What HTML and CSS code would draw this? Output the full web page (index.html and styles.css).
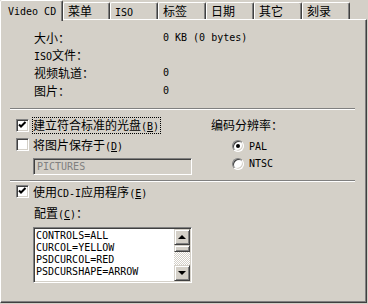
FILE: index.html
```html
<!DOCTYPE html>
<html lang="zh">
<head>
    <meta charset="UTF-8">
    <title>Video CD</title>
    <link rel="stylesheet" href="styles.css">
</head>
<body>
    <div class="dialog">
        <div class="tabs">
            <div class="tab active"><span class="en">Video CD</span></div>
            <div class="tab">菜单</div>
            <div class="tab"><span class="en">ISO</span></div>
            <div class="tab">标签</div>
            <div class="tab">日期</div>
            <div class="tab">其它</div>
            <div class="tab">刻录</div>
        </div>

        <div class="panel">
            <div class="info">
                <span>大小：</span><span class="en">0 KB (0 bytes)</span>
                <span><span class="en">ISO</span>文件：</span><span></span>
                <span>视频轨道：</span><span class="en">0</span>
                <span>图片：</span><span class="en">0</span>
            </div>

            <div class="sep"></div>

            <div class="mid">
                <div class="left">
                    <div class="check">
                        <span class="box"><svg width="9" height="9" viewBox="0 0 9 9"><path d="M1 3.5 L3 5.5 L7.5 1" fill="none" stroke="#000" stroke-width="2"/></svg></span>
                        <span class="focus">建立符合标准的光盘<span class="en">(<u>B</u>)</span></span>
                    </div>
                    <div class="check">
                        <span class="box"></span>
                        <span class="text">将图片保存于<span class="en">(<u>D</u>)</span></span>
                    </div>
                    <div class="field en">PICTURES</div>
                </div>
                <div class="right">
                    <div class="res-label">编码分辨率：</div>
                    <div class="radio first"><span class="dot on"></span><span class="en">PAL</span></div>
                    <div class="radio"><span class="dot"></span><span class="en">NTSC</span></div>
                </div>
            </div>

            <div class="sep second"></div>

            <div class="check cdi">
                <span class="box"><svg width="9" height="9" viewBox="0 0 9 9"><path d="M1 3.5 L3 5.5 L7.5 1" fill="none" stroke="#000" stroke-width="2"/></svg></span>
                <span class="text">使用<span class="en">CD-I</span>应用程序<span class="en">(<u>E</u>)</span></span>
            </div>

            <div class="cfg-label">配置<span class="en">(<u>C</u>)</span>：</div>

            <div class="listbox">
                <div class="lines en">
                    <div>CONTROLS=ALL</div>
                    <div>CURCOL=YELLOW</div>
                    <div>PSDCURCOL=RED</div>
                    <div>PSDCURSHAPE=ARROW</div>
                </div>
                <div class="scroll">
                    <div class="btn"><span class="arrow up"></span></div>
                    <div class="btn thumb"></div>
                    <div class="track"></div>
                    <div class="btn"><span class="arrow down"></span></div>
                </div>
            </div>
        </div>
    </div>
</body>
</html>
```

FILE: styles.css
```css
body {
    margin: 0;
    background: #d4d0c8;
    font-family: "Noto Sans CJK SC", sans-serif;
    font-size: 12px;
    color: #000;
}

.en {
    font-family: "DejaVu Sans Mono", monospace;
    font-size: 10px;
}

.dialog {
    width: 367px;
}

/* tab strip */
.tabs {
    display: flex;
    align-items: flex-end;
    height: 19px;
}

.tab {
    box-sizing: border-box;
    width: 48px;
    height: 17px;
    border: 1px solid;
    border-bottom: none;
    border-color: #fff #404040 transparent #fff;
    border-radius: 2px 2px 0 0;
    box-shadow: inset -1px 0 #808080;
    padding-left: 4px;
    line-height: 15px;
    white-space: nowrap;
}

.tab:nth-child(2) {
    width: 47px;
}

.tab.active {
    width: 63px;
    height: 21px;
    margin-bottom: -2px;
    padding-left: 7px;
    line-height: 17px;
    background: #d4d0c8;
    position: relative;
    z-index: 1;
}

/* page */
.panel {
    box-sizing: border-box;
    height: 284px;
    border: 1px solid;
    border-color: #fff #404040 #404040 #fff;
    box-shadow: inset -1px -1px #808080;
}

.info {
    display: grid;
    grid-template-columns: 129px auto;
    grid-auto-rows: 17.5px;
    align-items: center;
    padding: 9px 0 0 33px;
    line-height: 17.5px;
}

.sep {
    height: 0;
    margin: 9px 11px 0 9px;
    border-top: 1px solid #808080;
    border-bottom: 1px solid #fff;
}

.sep.second {
    margin-top: 5px;
}

.mid {
    display: grid;
    grid-template-columns: 195px 1fr;
    margin-top: 6px;
    padding-left: 15px;
}

.check {
    display: flex;
    align-items: center;
    height: 19px;
}

.box {
    box-sizing: border-box;
    width: 13px;
    height: 13px;
    margin-right: 4px;
    background: #fff;
    border: 1px solid;
    border-color: #808080 #fff #fff #808080;
    box-shadow: inset 1px 1px #404040, inset -1px -1px #d4d0c8;
    display: flex;
    align-items: center;
    justify-content: center;
}

.box svg {
    display: block;
}

.focus {
    margin-left: -1px;
    border: 1px dotted #000;
    line-height: 13px;
    padding-right: 1px;
}

.field {
    box-sizing: border-box;
    width: 159px;
    height: 17px;
    margin: 4px 0 0 17px;
    padding-left: 3px;
    border: 1px solid;
    border-color: #808080 #fff #fff #808080;
    box-shadow: inset 1px 1px #404040, inset -1px -1px #d4d0c8;
    color: #808080;
    line-height: 15px;
}

.right .res-label {
    height: 18px;
    line-height: 18px;
}

.radio {
    display: flex;
    align-items: center;
    height: 17px;
    padding-left: 21px;
}

.radio.first {
    margin-top: 3px;
    height: 18px;
}

.dot {
    box-sizing: border-box;
    width: 12px;
    height: 12px;
    margin-right: 5px;
    border-radius: 50%;
    background: #fff;
    border: 1px solid;
    border-color: #808080 #fff #fff #808080;
    box-shadow: inset 1px 1px #404040, inset -1px -1px #d4d0c8;
    display: flex;
    align-items: center;
    justify-content: center;
}

.dot.on::after {
    content: "";
    width: 4px;
    height: 4px;
    border-radius: 50%;
    background: #000;
}

.check.cdi {
    height: 18px;
    padding-left: 15px;
}

.cfg-label {
    margin-top: 4px;
    padding-left: 33px;
    height: 18px;
    line-height: 18px;
}

/* list box */
.listbox {
    box-sizing: border-box;
    display: flex;
    width: 159px;
    height: 56px;
    margin: 5px 0 0 32px;
    background: #fff;
    border: 1px solid;
    border-color: #808080 #fff #fff #808080;
    box-shadow: inset 1px 1px #404040, inset -1px -1px #d4d0c8;
    padding: 1px;
}

.lines {
    flex: 1;
    line-height: 12px;
    padding: 1px 0 0 1px;
    white-space: nowrap;
    overflow: hidden;
}

.scroll {
    width: 16px;
    display: flex;
    flex-direction: column;
}

.btn {
    box-sizing: border-box;
    height: 16px;
    background: #d4d0c8;
    border: 1px solid;
    border-color: #d4d0c8 #404040 #404040 #d4d0c8;
    box-shadow: inset 1px 1px #fff, inset -1px -1px #808080;
    display: flex;
    align-items: center;
    justify-content: center;
}

.btn.thumb {
    height: 7px;
}

.track {
    flex: 1;
    background: repeating-conic-gradient(#d4d0c8 0 25%, #fff 0 50%) 0 0 / 2px 2px;
}

.arrow {
    width: 0;
    height: 0;
    border-left: 4px solid transparent;
    border-right: 4px solid transparent;
}

.arrow.up {
    border-bottom: 4px solid #000;
}

.arrow.down {
    border-top: 4px solid #000;
}
```
